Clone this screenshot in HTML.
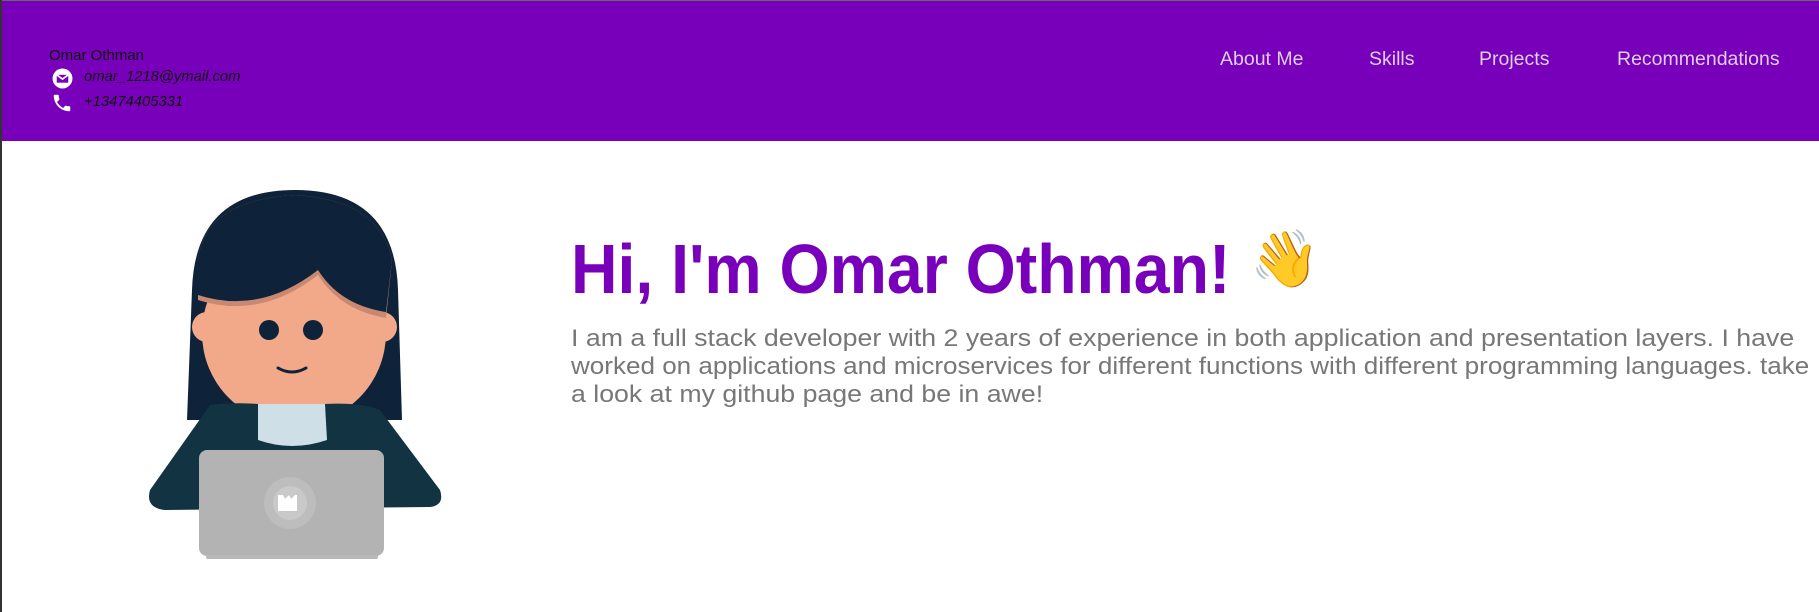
<!DOCTYPE html>
<html><head><meta charset="utf-8"><style>
body{margin:0;width:1819px;height:612px;overflow:hidden;background:#fff;font-family:"Liberation Sans",sans-serif;position:relative}
.hdr{position:absolute;left:2px;top:1px;right:0;height:140px;background:#7800bb}
.topline{position:absolute;left:0;top:0;width:1819px;height:1px;background:#666}
.lb{position:absolute;left:0;top:0;width:2px;height:612px;background:#333}
.t{position:absolute;white-space:nowrap}
.nav{color:#dcd0e8;font-size:19.5px;top:48px}
.p{left:571px;font-size:24.5px;color:#777;transform-origin:0 0;transform:scaleX(1.09)}
</style></head><body>
<div class="hdr"></div><div class="topline"></div><div class="lb"></div>
<div class="t" style="left:49px;top:47px;font-size:15px;color:#111">Omar Othman</div>
<svg class="t" style="left:52px;top:68px" width="21" height="21" viewBox="0 0 20 20"><circle cx="10" cy="10" r="9.5" fill="#fff"/><path d="M4.5 6.5h11v7.5h-11z" fill="#7800bb"/><path d="M4.5 6.5l5.5 4 5.5-4" stroke="#fff" stroke-width="1.6" fill="none"/></svg>
<div class="t" style="left:84px;top:69px;font-size:14.8px;font-style:italic;color:#111">omar_1218@ymail.com</div>
<svg class="t" style="left:51px;top:92px" width="22" height="22" viewBox="0 0 24 24"><path fill="#fff" d="M6.6 10.8c1.4 2.8 3.8 5.1 6.6 6.6l2.2-2.2c.3-.3.7-.4 1-.2 1.1.4 2.300.6 3.6.6.6 0 1 .4 1 1V20c0 .6-.4 1-1 1C10.6 21 3 13.4 3 4c0-.6.4-1 1-1h3.5c.6 0 1 .4 1 1 0 1.3.2 2.5.6 3.6.1.3 0 .7-.2 1z"/></svg>
<div class="t" style="left:84px;top:94px;font-size:14.8px;font-style:italic;color:#111">+13474405331</div>
<div class="t nav" style="left:1220px">About Me</div>
<div class="t nav" style="left:1369px">Skills</div>
<div class="t nav" style="left:1479px">Projects</div>
<div class="t nav" style="left:1617px">Recommendations</div>
<div class="t" style="left:571px;top:229px;font-size:70px;line-height:80px;font-weight:bold;color:#7800bb;transform:scaleX(0.92);transform-origin:0 0">Hi, I'm Omar Othman!</div>
<div class="t" style="left:1250px;top:226px;font-size:56px;line-height:66px">👋</div>
<div class="t p" style="top:325px">I am a full stack developer with 2 years of experience in both application and presentation layers. I have</div>
<div class="t p" style="top:353px;transform:scaleX(1.063)">worked on applications and microservices for different functions with different programming languages. take</div>
<div class="t p" style="top:381px">a look at my github page and be in awe!</div>
<svg class="t" style="left:0;top:0" width="500" height="612">
<path d="M187 420 L192 290 Q195 190 295 190 Q395 190 398 290 L402 420 Z" fill="#0e2239"/>
<circle cx="207" cy="327" r="15" fill="#f2a98a"/><circle cx="382" cy="327" r="15" fill="#f2a98a"/>
<rect x="268" y="380" width="50" height="30" fill="#e0957a"/>
<circle cx="294" cy="333" r="92" fill="#f2a98a"/>
<path d="M198 300 Q260 320 318 275 Q340 310 386 318 L392 260 Q380 200 295 195 Q205 200 198 260 Z" fill="#c98872"/>
<path d="M198 295 Q260 315 318 270 Q340 305 386 312 L392 260 Q380 200 295 195 Q205 200 198 260 Z" fill="#0e2239"/>
<circle cx="269" cy="330" r="10" fill="#0e2239"/><circle cx="313" cy="330" r="10" fill="#0e2239"/>
<path d="M278 368 Q292 376 306 368" stroke="#0e2239" stroke-width="3" fill="none" stroke-linecap="round"/>
<path d="M210 405 Q230 402 258 404 L325 404 Q360 402 380 410 L440 490 Q445 505 430 507 L165 510 Q145 508 150 490 Z" fill="#123341"/>
<path d="M258 404 L325 404 L327 440 Q292 452 258 440 Z" fill="#cfdfe7"/>
<rect x="199" y="450" width="185" height="106" rx="8" fill="#b3b3b3"/>
<rect x="206" y="555" width="172" height="4" rx="2" fill="#b8b8b8"/>
<circle cx="290" cy="503" r="26" fill="#bdbdbd"/><circle cx="290" cy="503" r="17" fill="#c9c9c9"/>
<path d="M278 495 l5 0 l2 4 l4-4 l2 4 l4-4 l2 0 l0 16 l-19 0 z" fill="#fff"/>
</svg>
</body></html>
